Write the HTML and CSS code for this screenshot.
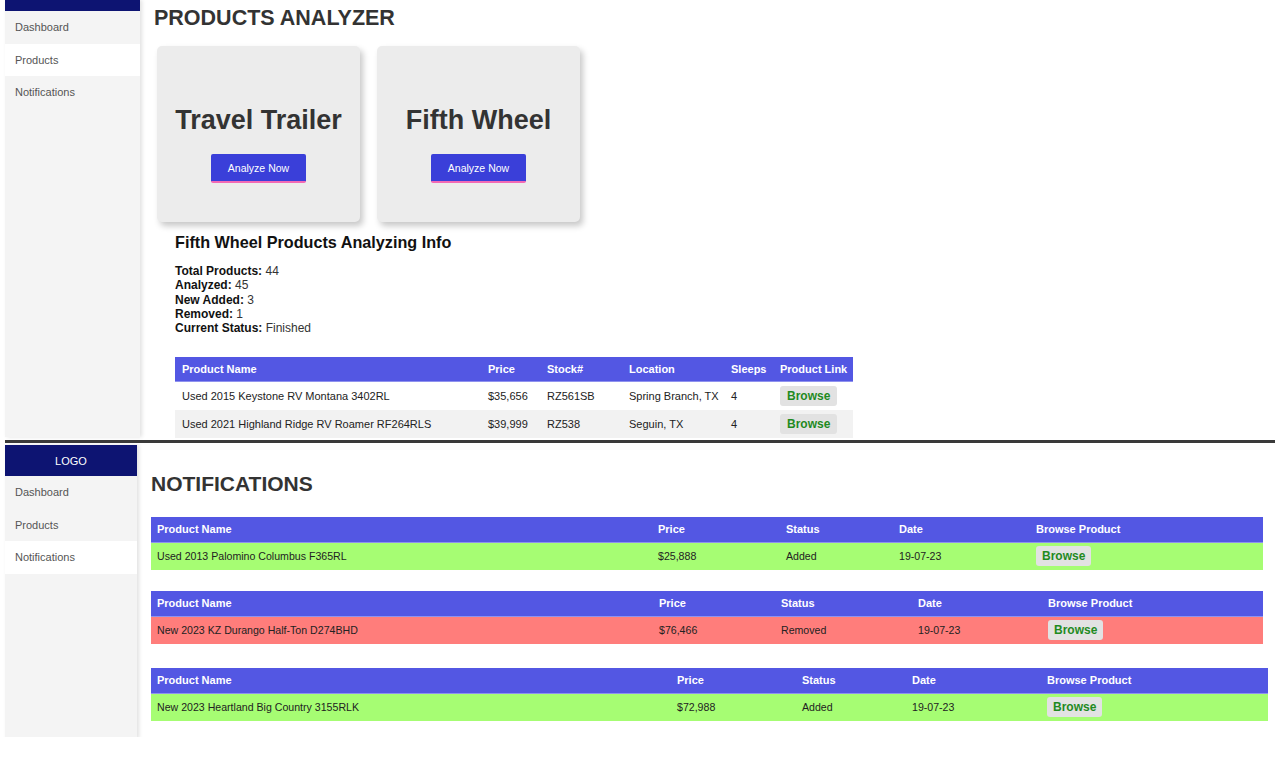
FILE: index.html
```html
<!DOCTYPE html>
<html>
<head>
<meta charset="utf-8">
<link rel="stylesheet" href="styles.css">
</head>
<body>
<div class="shot shot-top">
  <aside class="sidebar sidebar-top">
    <div class="logo logo-cut"></div>
    <div class="nav-item">Dashboard</div>
    <div class="nav-item active">Products</div>
    <div class="nav-item">Notifications</div>
  </aside>
  <main class="main main-top">
    <h1 class="page-title">PRODUCTS ANALYZER</h1>
    <div class="cards">
      <div class="card">
        <h2 class="card-title">Travel Trailer</h2>
        <button class="analyze">Analyze Now</button>
      </div>
      <div class="card">
        <h2 class="card-title">Fifth Wheel</h2>
        <button class="analyze">Analyze Now</button>
      </div>
    </div>
    <section class="info">
      <h3 class="info-title">Fifth Wheel Products Analyzing Info</h3>
      <div class="stats">
        <div><b>Total Products:</b> 44</div>
        <div><b>Analyzed:</b> 45</div>
        <div><b>New Added:</b> 3</div>
        <div><b>Removed:</b> 1</div>
        <div><b>Current Status:</b> Finished</div>
      </div>
      <table class="ptable">
        <colgroup>
          <col class="c-name"><col class="c-price"><col class="c-stock"><col class="c-loc"><col class="c-sleeps"><col class="c-link">
        </colgroup>
        <thead>
          <tr><th>Product Name</th><th>Price</th><th>Stock#</th><th>Location</th><th>Sleeps</th><th>Product Link</th></tr>
        </thead>
        <tbody>
          <tr><td>Used 2015 Keystone RV Montana 3402RL</td><td>$35,656</td><td>RZ561SB</td><td>Spring Branch, TX</td><td>4</td><td><span class="browse">Browse</span></td></tr>
          <tr class="alt"><td>Used 2021 Highland Ridge RV Roamer RF264RLS</td><td>$39,999</td><td>RZ538</td><td>Seguin, TX</td><td>4</td><td><span class="browse">Browse</span></td></tr>
        </tbody>
      </table>
    </section>
  </main>
</div>
<div class="divider"></div>
<div class="shot shot-bottom">
  <aside class="sidebar sidebar-bottom">
    <div class="logo">LOGO</div>
    <div class="nav-item">Dashboard</div>
    <div class="nav-item">Products</div>
    <div class="nav-item active">Notifications</div>
  </aside>
  <main class="main main-bottom">
    <h1 class="page-title notif-title">NOTIFICATIONS</h1>
    <table class="ntable nt1">
      <colgroup><col class="a"><col class="b"><col class="c"><col class="d"><col class="e"></colgroup>
      <thead><tr><th>Product Name</th><th>Price</th><th>Status</th><th>Date</th><th>Browse Product</th></tr></thead>
      <tbody><tr class="added"><td>Used 2013 Palomino Columbus F365RL</td><td>$25,888</td><td>Added</td><td>19-07-23</td><td><span class="browse">Browse</span></td></tr></tbody>
    </table>
    <table class="ntable nt2">
      <colgroup><col class="a"><col class="b"><col class="c"><col class="d"><col class="e"></colgroup>
      <thead><tr><th>Product Name</th><th>Price</th><th>Status</th><th>Date</th><th>Browse Product</th></tr></thead>
      <tbody><tr class="removed"><td>New 2023 KZ Durango Half-Ton D274BHD</td><td>$76,466</td><td>Removed</td><td>19-07-23</td><td><span class="browse">Browse</span></td></tr></tbody>
    </table>
    <table class="ntable nt3">
      <colgroup><col class="a"><col class="b"><col class="c"><col class="d"><col class="e"></colgroup>
      <thead><tr><th>Product Name</th><th>Price</th><th>Status</th><th>Date</th><th>Browse Product</th></tr></thead>
      <tbody><tr class="added"><td>New 2023 Heartland Big Country 3155RLK</td><td>$72,988</td><td>Added</td><td>19-07-23</td><td><span class="browse">Browse</span></td></tr></tbody>
    </table>
  </main>
</div>
</body>
</html>
```
FILE: styles.css
```css
* { box-sizing: border-box; }
html, body { margin: 0; padding: 0; background: #fff; }
body {
  font-family: "Liberation Sans", Arial, sans-serif;
  color: #333;
  width: 1280px;
  height: 769px;
  overflow: hidden;
}

.shot {
  display: flex;
  padding-left: 5px;
  overflow: hidden;
}
.shot-top { height: 440px; }
.shot-bottom { height: 294px; }

.divider {
  height: 3px;
  margin-left: 5px;
  margin-right: 5px;
  background: #3a3a3a;
}

.sidebar {
  background: #f4f4f4;
  box-shadow: 2px 0 4px rgba(0,0,0,0.12);
  flex: none;
  display: flex;
  flex-direction: column;
  position: relative;
  z-index: 1;
}
.sidebar-top { width: 135px; height: 437px; }
.sidebar-bottom { width: 132px; height: 294px; margin-top: 2px; }

.logo {
  background: #0d1472;
  color: #fff;
  font-size: 11px;
  height: 31px;
  display: flex;
  align-items: center;
  justify-content: center;
}
.logo-cut { height: 11px; }

.nav-item {
  height: 32.5px;
  display: flex;
  align-items: center;
  padding-left: 10px;
  font-size: 11px;
  color: #555;
}
.nav-item.active { background: #fff; }

.main { flex: 1; min-width: 0; }
.main-top { padding-left: 14px; }
.main-bottom { padding-left: 14px; }

.page-title {
  margin: 0;
  font-size: 21.5px;
  font-weight: bold;
  color: #333;
}
.main-top .page-title { padding-top: 6px; line-height: 25px; }

.cards {
  display: flex;
  gap: 17px;
  margin-top: 15px;
  margin-left: 3px;
}
.card {
  width: 203px;
  height: 176px;
  background: #ececec;
  border-radius: 5px;
  box-shadow: 3px 4px 6px rgba(0,0,0,0.22);
  display: flex;
  flex-direction: column;
  align-items: center;
  padding-top: 58px;
}
.card-title {
  margin: 0;
  font-size: 27px;
  font-weight: bold;
  line-height: 32px;
  color: #333;
}
.analyze {
  margin-top: 18px;
  width: 95px;
  height: 29px;
  border: none;
  border-bottom: 2px solid #f26ab5;
  border-radius: 2px;
  background: #3a3fd9;
  color: #fff;
  font-family: "Liberation Sans", Arial, sans-serif;
  font-size: 10.5px;
  padding: 0;
}

.info { margin-left: 21px; }
.info-title {
  margin: 10px 0 0 0;
  font-size: 16.2px;
  line-height: 20px;
  font-weight: bold;
  color: #111;
}
.stats {
  margin-top: 12px;
  font-size: 12px;
  line-height: 14.3px;
  color: #333;
}
.stats b { color: #111; }

table {
  border-collapse: collapse;
  table-layout: fixed;
  font-size: 11px;
}
th {
  background: #5357e3;
  color: #fff;
  font-weight: bold;
  text-align: left;
  height: 24px;
  padding: 0 6px;
  border-bottom: 1px solid #8f92ee;
  white-space: nowrap;
}
td {
  height: 28px;
  padding: 0 6px;
  color: #222;
  white-space: nowrap;
}

.ptable { width: 678px; margin-top: 22px; }
.ptable th { padding: 0 4px 0 7px; }
.ptable td { padding: 0 4px 0 7px; height: 28.5px; }
.ptable .alt td { background: #f2f2f2; }
.ptable .c-name { width: 306px; }
.ptable .c-price { width: 59px; }
.ptable .c-stock { width: 82px; }
.ptable .c-loc { width: 102px; }
.ptable .c-sleeps { width: 49px; }
.ptable .c-link { width: 80px; }

.browse {
  display: inline-block;
  background: #e2e2e2;
  color: #1f8a1f;
  font-weight: bold;
  font-size: 12px;
  padding: 3px 7px;
  border-radius: 3px;
  line-height: 14px;
}

.notif-title { margin-top: 28px; line-height: 26px; font-size: 21px; }

.ntable th { height: 25px; }
.ntable td { height: 28px; font-size: 10.6px; }
.ntable .added td { background: #a6fd73; }
.ntable .removed td { background: #ff7d7b; }
.ntable .browse { padding: 3px 6px; }

.nt1 { width: 1112px; margin-top: 20px; }
.nt1 .a { width: 501px; } .nt1 .b { width: 128px; } .nt1 .c { width: 113px; } .nt1 .d { width: 137px; } .nt1 .e { width: 233px; }
.nt2 { width: 1112px; margin-top: 21px; }
.nt2 .a { width: 502px; } .nt2 .b { width: 122px; } .nt2 .c { width: 137px; } .nt2 .d { width: 130px; } .nt2 .e { width: 221px; }
.nt3 { width: 1117px; margin-top: 24px; }
.nt3 .a { width: 520px; } .nt3 .b { width: 125px; } .nt3 .c { width: 110px; } .nt3 .d { width: 135px; } .nt3 .e { width: 227px; }
```
